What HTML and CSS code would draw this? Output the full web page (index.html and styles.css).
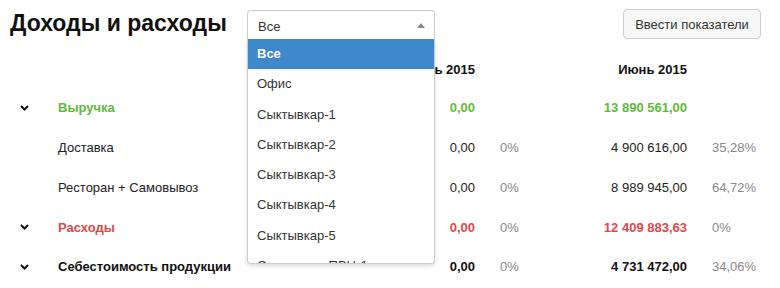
FILE: index.html
```html
<!DOCTYPE html>
<html lang="ru">
<head>
  <meta charset="UTF-8">
  <title>Доходы и расходы</title>
  <link rel="stylesheet" href="styles.css">
</head>
<body>
  <div class="page">
    <!-- Шапка: заголовок, фильтр и кнопка -->
    <div class="topbar">
      <h1>Доходы и расходы</h1>
      <div class="picker">
        <div class="picker-box">
          <span>Все</span>
          <span class="picker-arrow"></span>
        </div>
        <ul class="picker-drop">
          <li class="active">Все</li>
          <li>Офис</li>
          <li>Сыктывкар-1</li>
          <li>Сыктывкар-2</li>
          <li>Сыктывкар-3</li>
          <li>Сыктывкар-4</li>
          <li>Сыктывкар-5</li>
          <li>Сыктывкар-ПВЦ-1</li>
        </ul>
      </div>
      <button class="btn">Ввести показатели</button>
    </div>

    <!-- Таблица показателей -->
    <div class="report">
      <div class="row head">
        <span></span>
        <span></span>
        <span class="num">Апрель 2015</span>
        <span></span>
        <span class="num">Июнь 2015</span>
        <span></span>
      </div>

      <div class="row group income">
        <span class="toggle"><svg width="9" height="6" viewBox="0 0 9 6"><polyline points="1,1 4.5,4.5 8,1"/></svg></span>
        <span class="name">Выручка</span>
        <span class="num">0,00</span>
        <span class="pct"></span>
        <span class="num">13 890 561,00</span>
        <span class="pct"></span>
      </div>

      <div class="row">
        <span></span>
        <span class="name">Доставка</span>
        <span class="num">0,00</span>
        <span class="pct">0%</span>
        <span class="num">4 900 616,00</span>
        <span class="pct">35,28%</span>
      </div>

      <div class="row">
        <span></span>
        <span class="name">Ресторан + Самовывоз</span>
        <span class="num">0,00</span>
        <span class="pct">0%</span>
        <span class="num">8 989 945,00</span>
        <span class="pct">64,72%</span>
      </div>

      <div class="row group expense">
        <span class="toggle"><svg width="9" height="6" viewBox="0 0 9 6"><polyline points="1,1 4.5,4.5 8,1"/></svg></span>
        <span class="name">Расходы</span>
        <span class="num">0,00</span>
        <span class="pct">0%</span>
        <span class="num">12 409 883,63</span>
        <span class="pct">0%</span>
      </div>

      <div class="row group">
        <span class="toggle"><svg width="9" height="6" viewBox="0 0 9 6"><polyline points="1,1 4.5,4.5 8,1"/></svg></span>
        <span class="name">Себестоимость продукции</span>
        <span class="num">0,00</span>
        <span class="pct">0%</span>
        <span class="num">4 731 472,00</span>
        <span class="pct">34,06%</span>
      </div>
    </div>
  </div>
</body>
</html>
```

FILE: styles.css
```css
/* Базовый сброс */
* {
  box-sizing: border-box;
  margin: 0;
  padding: 0;
}

body {
  font-family: "Liberation Sans", Arial, sans-serif;
  font-size: 13px;
  color: #222;
  background: #fff;
  overflow: hidden;
}

.page {
  width: 780px;
}

/* Шапка */
.topbar {
  display: flex;
  align-items: flex-start;
  height: 51px;
  padding: 9px 19px 0 10px;
}

h1 {
  font-size: 23px;
  font-weight: bold;
  color: #111;
  line-height: 28px;
  width: 237px;
}

.picker {
  position: relative;
  width: 188px;
  margin-top: 1px;
}

.picker-box {
  display: flex;
  align-items: center;
  justify-content: space-between;
  height: 30px;
  padding: 1px 9px 0 10px;
  border: 1px solid #ccc;
  border-bottom: none;
  border-radius: 4px 4px 0 0;
  background: #fff;
  color: #333;
}

.picker-arrow {
  width: 0;
  height: 0;
  border-left: 4px solid transparent;
  border-right: 4px solid transparent;
  border-bottom: 5px solid #888;
  margin-top: -1px;
}

.picker-drop {
  position: absolute;
  top: 29px;
  left: 0;
  width: 188px;
  height: 225px;
  overflow: hidden;
  list-style: none;
  background: #fff;
  border: 1px solid #ccc;
  border-top: none;
  border-radius: 0 0 4px 4px;
  box-shadow: 0 2px 4px rgba(0, 0, 0, 0.15);
  z-index: 10;
}

.picker-drop li {
  height: 30.3px;
  line-height: 30px;
  padding-left: 9px;
  color: #333;
}

.picker-drop li.active {
  background: #3f88c9;
  color: #fff;
  font-weight: bold;
}

.btn {
  margin-left: auto;
  height: 30px;
  width: 138px;
  font-family: inherit;
  font-size: 13px;
  color: #333;
  background: #f7f7f7;
  border: 1px solid #ccc;
  border-radius: 4px;
}

/* Таблица */
.row {
  display: grid;
  grid-template-columns: 58px 317px 100px 112px 100px 93px;
  align-items: center;
  height: 39.75px;
}

.row.head {
  height: 37px;
  font-weight: bold;
  color: #111;
}

.num {
  text-align: right;
}

.pct {
  padding-left: 25px;
  color: #888;
}

.toggle {
  padding-left: 20px;
  display: flex;
  align-items: center;
}

.toggle svg {
  fill: none;
  stroke: #111;
  stroke-width: 2;
}

.group .name,
.group .num {
  font-weight: bold;
  color: #111;
}

.income .name,
.income .num {
  color: #5fba3a;
}

.expense .name,
.expense .num {
  color: #e0484c;
}
```
